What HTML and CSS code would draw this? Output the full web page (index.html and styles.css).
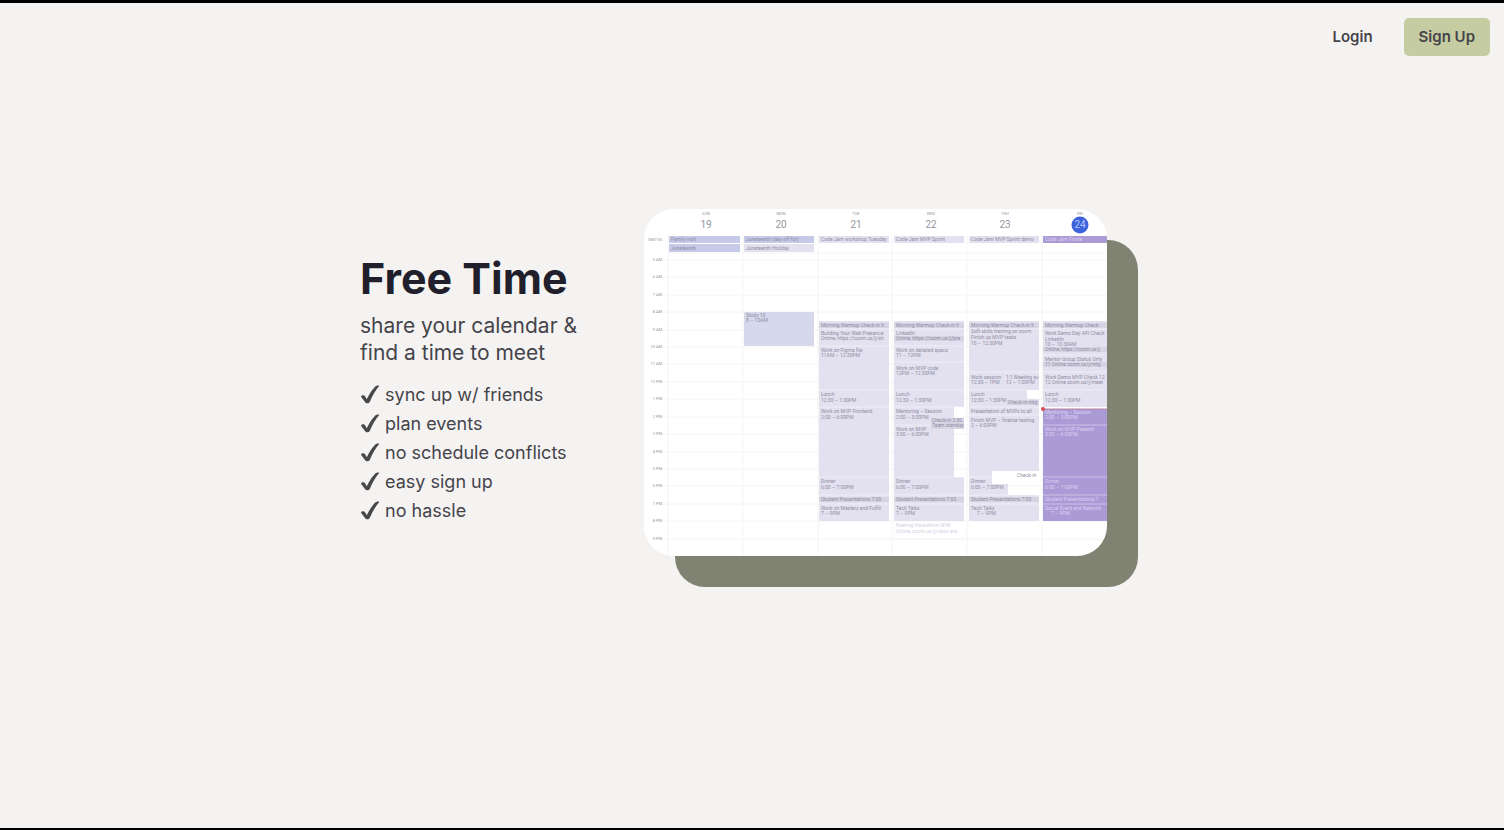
FILE: index.html
```html
<!DOCTYPE html>
<html lang="en">
<head>
<meta charset="utf-8">
<meta name="viewport" content="width=device-width, initial-scale=1">
<title>Free Time</title>
<link rel="stylesheet" href="styles.css">
</head>
<body>
<svg class="sprite" aria-hidden="true">
  <symbol id="check" viewBox="0 0 20 20"><path d="M1 11.800c0-1.700 3.100-2.300 4.200-.4l1.600 2.900C9 9.500 12 4.700 15.300 1.500c1.300-1.200 4.600-1.300 3.700-.2C15.500 5.500 12.300 10.800 10 16.500c-.9 2.200-3.900 2.500-5 .6z"/></symbol>
</svg>
<header class="topbar">
  <nav class="topbar-nav">
    <a class="nav-link" href="#login">Login</a>
    <button class="signup" type="button">Sign Up</button>
  </nav>
</header>
<main class="hero">
  <section class="intro">
    <h1 class="title">Free Time</h1>
    <p class="tagline">share your calendar &amp;<br>find a time to meet</p>
    <ul class="features">
      <li class="feature"><svg class="check"><use href="#check"/></svg>sync up w/ friends</li>
      <li class="feature"><svg class="check"><use href="#check"/></svg>plan events</li>
      <li class="feature"><svg class="check"><use href="#check"/></svg>no schedule conflicts</li>
      <li class="feature"><svg class="check"><use href="#check"/></svg>easy sign up</li>
      <li class="feature"><svg class="check"><use href="#check"/></svg>no hassle</li>
    </ul>
  </section>
  <div class="preview">
    <svg class="calendar" viewBox="0 0 463 347" role="img" aria-label="Weekly calendar">
      <path class="grid" d="M18 51H463M18 68H463M18 86H463M18 103H463M18 121H463M18 138H463M18 155H463M18 173H463M18 190H463M18 208H463M18 225H463M18 243H463M18 260H463M18 277H463M18 295H463M18 312H463M18 330H463M24 44H463M24 26V347M99 26V347M174 26V347M248 26V347M323 26V347M398 26V347"/>
      <g class="day">
        <text x="62" y="6">SUN</text><text x="137" y="6">MON</text><text x="212" y="6">TUE</text><text x="287" y="6">WED</text><text x="361" y="6">THU</text><text x="436" y="6">FRI</text>
      </g>
      <circle class="today" cx="436" cy="16" r="8.500"/>
      <g class="date">
        <text x="62" y="19">19</text><text x="137" y="19">20</text><text x="212" y="19">21</text><text x="287" y="19">22</text><text x="361" y="19">23</text><text class="date-today" x="436" y="19">24</text>
      </g>
      <g class="hour">
        <text x="18" y="32">GMT-05</text><text x="18" y="52">5 AM</text><text x="18" y="69">6 AM</text><text x="18" y="87">7 AM</text><text x="18" y="104">8 AM</text><text x="18" y="122">9 AM</text><text x="18" y="139">10 AM</text><text x="18" y="156">11 AM</text><text x="18" y="174">12 PM</text><text x="18" y="191">1 PM</text><text x="18" y="209">2 PM</text><text x="18" y="226">3 PM</text><text x="18" y="244">4 PM</text><text x="18" y="261">5 PM</text><text x="18" y="278">6 PM</text><text x="18" y="296">7 PM</text><text x="18" y="313">8 PM</text><text x="18" y="331">9 PM</text>
      </g>

      <svg x="25" width="71" height="347" class="column">
        <path class="blue" d="M0 27H71V34H0zM0 35H71V43H0z"/>
        <text x="2" y="32">Family visit</text><text x="2" y="41">Juneteenth</text>
      </svg>

      <svg x="100" width="70" height="347" class="column">
        <path class="blue" d="M0 27H70V34H0z"/>
        <path class="lilac" d="M0 35H70V43H0z"/>
        <path class="sky" d="M0 103H70V137H0z"/>
        <text x="2" y="32">Juneteenth (day off for)</text><text x="2" y="41">Juneteenth Holiday</text>
        <text x="2" y="108">Study 10</text><text x="2" y="113">8 – 10AM</text>
      </svg>

      <svg x="175" width="70" height="347" class="column">
        <path class="lilac" d="M0 27H70V34H0zM0 112H70V312H0z"/>
        <path class="divider" d="M0 120H70M0 137H70M0 181H70M0 198H70M0 268H70M0 286H70M0 295H70"/>
        <path class="band" d="M0 114H70V119H0zM0 288H70V293H0z"/>
        <text x="2" y="32">Code Jam workshop Tuesday</text>
        <text x="2" y="118">Morning Warmup Check-in 9</text>
        <text x="2" y="126">Building Your Web Presence</text><text x="2" y="131">Online, https://zoom.us/j/str</text>
        <text x="2" y="143">Work on Figma file</text><text x="2" y="148">11AM – 12:30PM</text>
        <text x="2" y="187">Lunch</text><text x="2" y="193">12:30 – 1:30PM</text>
        <text x="2" y="204">Work on MVP Frontend</text><text x="2" y="210">2:00 – 6:00PM</text>
        <text x="2" y="274">Dinner</text><text x="2" y="280">6:00 – 7:00PM</text>
        <text x="2" y="292">Student Presentations 7:00</text>
        <text x="2" y="301">Work on Mastery and Fulfill</text><text x="2" y="306">7 – 9PM</text>
      </svg>

      <svg x="250" width="70" height="347" class="column">
        <path class="lilac" d="M0 27H70V34H0zM0 112H70V198H60V268H70V312H0z"/>
        <path class="divider" d="M0 120H70M0 137H70M0 153H70M0 181H70M0 198H70M0 216H58M0 268H70M0 286H70M0 295H70"/>
        <path class="band" d="M0 114H70V119H0zM0 127H70V132H0zM0 288H70V293H0z"/>
        <text x="2" y="32">Code Jam MVP Sprint</text>
        <text x="2" y="118">Morning Warmup Check-in 9</text>
        <text x="2" y="126">LinkedIn</text><text x="2" y="131">Online, https://zoom.us/j/pre</text>
        <text x="2" y="143">Work on detailed specs</text><text x="2" y="148">11 – 12PM</text>
        <text x="2" y="161">Work on MVP code</text><text x="2" y="166">12PM – 12:30PM</text>
        <text x="2" y="187">Lunch</text><text x="2" y="193">12:30 – 1:30PM</text>
        <text x="2" y="204">Mentoring – Session</text><text x="2" y="210">2:00 – 3:00PM</text>
        <path class="band" d="M37 209H70V220H37z"/>
        <text x="38" y="213">Check-in 2:30</text><text x="38" y="218">Team standup</text>
        <text x="2" y="222">Work on MVP</text><text x="2" y="227">3:00 – 6:00PM</text>
        <text x="2" y="274">Dinner</text><text x="2" y="280">6:00 – 7:00PM</text>
        <text x="2" y="292">Student Presentations 7:00</text>
        <text x="2" y="301">Tech Talks</text><text x="2" y="306">7 – 9PM</text>
        <g class="pale"><text x="2" y="318">Evening Hackathon 9PM</text><text x="2" y="324">Online, zoom.us/j/class eve</text></g>
        <path class="rule" d="M0 312V330H70V326"/>
      </svg>

      <svg x="325" width="70" height="347" class="column">
        <path class="lilac" d="M0 27H70V34H0zM0 112H70V181H58V190H70V262H23V275H39V286H70V312H0z"/>
        <path class="divider" d="M0 120H70M0 163H70M0 181H58M0 198H70M0 206H70M0 268H23M0 286H70M0 295H70"/>
        <path class="band" d="M0 114H70V119H0zM38 191H70V196H38zM0 288H70V293H0z"/>
        <text x="2" y="32">Code Jam MVP Sprint demo</text>
        <text x="2" y="118">Morning Warmup Check-in 9</text>
        <text x="2" y="124">Soft skills training on zoom</text>
        <text x="2" y="130">Finish up MVP tasks</text><text x="2" y="136">10 – 12:30PM</text>
        <text x="2" y="170">Work session</text><text x="2" y="175">12:30 – 1PM</text>
        <text x="37" y="170">1:1 Meeting w/</text><text x="37" y="175">12 – 1:00PM</text>
        <text x="2" y="187">Lunch</text><text x="2" y="193">12:30 – 1:30PM</text><text x="39" y="195">Check-in mtg</text>
        <text x="2" y="204">Presentation of MVPs to all</text>
        <text x="2" y="213">Finish MVP – finalize testing</text><text x="2" y="218">2 – 6:00PM</text>
        <text x="48" y="268">Check-in</text>
        <text x="2" y="274">Dinner</text><text x="2" y="280">6:00 – 7:00PM</text>
        <text x="2" y="292">Student Presentations 7:00</text>
        <text x="2" y="301">Tech Talks</text><text x="8" y="306">7 – 9PM</text>
      </svg>

      <svg x="399" width="64" height="347" class="column">
        <path class="purple" d="M0 27H64V34H0zM0 200H64V312H0z"/>
        <path class="lilac" d="M0 112H64V198H0z"/>
        <path class="divider" d="M0 120H64M0 146H64M0 163H64M0 181H64M0 216H64M0 268H64M0 286H64M0 295H64"/>
        <path class="band" d="M0 114H64V119H0zM0 138H64V143H0zM0 153H64V158H0z"/>
        <text x="2" y="118">Morning Warmup Check</text>
        <text x="2" y="126">Work Demo Day API Check</text><text x="2" y="132">LinkedIn</text><text x="2" y="137">10 – 10:30AM</text>
        <text x="2" y="142">Online, https://zoom.us/j</text>
        <text x="2" y="152">Mentor Group Status Only</text><text x="2" y="157">11 Online zoom.us/j/mtg</text>
        <text x="2" y="170">Work Demo MVP Check 12</text><text x="2" y="175">12 Online zoom.us/j/meet</text>
        <text x="2" y="187">Lunch</text><text x="2" y="193">12:30 – 1:30PM</text>
        <g class="light">
          <text x="2" y="32">Code Jam Finale</text>
          <text x="2" y="205">Mentoring – Session</text><text x="2" y="210">2:00 – 3:00PM</text>
          <text x="2" y="222">Work on MVP Present</text><text x="2" y="227">3:00 – 6:00PM</text>
          <text x="2" y="274">Dinner</text><text x="2" y="280">6:00 – 7:00PM</text>
          <text x="2" y="292">Student Presentations 7</text>
          <text x="2" y="301">Social Event and Network</text><text x="8" y="306">7 – 9PM</text>
        </g>
      </svg>
      <path class="now-line" d="M399 200H463"/>
      <circle class="now-dot" cx="399" cy="200" r="2"/>
    </svg>
  </div>
</main>
</body>
</html>
```
FILE: styles.css
```css
* {
  box-sizing: border-box;
}

body {
  margin: 0;
  min-height: 100vh;
  display: flex;
  flex-direction: column;
  border-top: 3px solid #000;
  border-bottom: 2px solid #000;
  background: #f5f3f2;
  color: #45444a;
  font-family: Inter, "Liberation Sans", sans-serif;
}

.sprite {
  display: none;
}

.topbar {
  padding: 15px 14px 13px;
}

.topbar-nav {
  display: flex;
  justify-content: flex-end;
  align-items: center;
  gap: 16px;
}

.nav-link,
.signup {
  padding: 0 15px;
  font: 600 15px/38px Inter, "Liberation Sans", sans-serif;
  color: #45444a;
  text-decoration: none;
}

.signup {
  border: 0;
  border-radius: 5px;
  background: #c6cca1;
  cursor: pointer;
}

.hero {
  flex: 1;
  display: flex;
  justify-content: center;
  align-items: center;
  gap: 67px;
  padding: 0 61px 132px 24px;
}

.intro {
  padding-top: 14px;
}

.title {
  margin: 0 0 10px;
  font-size: 43px;
  line-height: 48px;
  font-weight: 700;
  color: #201f2b;
}

.tagline {
  margin: 0 0 14px;
  font-size: 21px;
  line-height: 27px;
}

.features {
  margin: 0;
  padding: 0;
  list-style: none;
  font-size: 18px;
  line-height: 29px;
}

.feature {
  display: flex;
  align-items: center;
  gap: 5px;
}

.check {
  width: 20px;
  height: 20px;
  fill: #48484a;
}

.preview {
  flex: 0 1 463px;
  display: flex;
  border-radius: 30px;
  background: #fff;
  box-shadow: 31px 31px 0 #808272;
  overflow: hidden;
}

.calendar {
  width: 100%;
  height: auto;
  font-family: Roboto, "Liberation Sans", sans-serif;
}

.grid,
.rule {
  fill: none;
  stroke: #f5f4f6;
}

.day,
.date {
  text-anchor: middle;
  fill: #96969c;
}

.day {
  font-size: 4px;
}

.date {
  font-size: 10px;
}

.date-today {
  fill: #b5c6fb;
}

.today {
  fill: #3c62dc;
}

.hour {
  font-size: 4px;
  text-anchor: end;
  fill: #96969c;
}

.column {
  font-size: 5px;
  fill: #8f8da3;
}

.blue {
  fill: #c6c9e7;
}

.sky {
  fill: #d6d9eb;
}

.lilac {
  fill: #e3e1f0;
}

.purple {
  fill: #aa9ad5;
}

.band {
  fill: #d6d4e3;
}

.divider {
  stroke: #fff;
  stroke-opacity: 0.4;
}

.light {
  fill: #dcd2f2;
}

.pale {
  fill: #d3d1df;
}

.now-line {
  stroke: #bc829f;
}

.now-dot {
  fill: #d64b55;
}
```
